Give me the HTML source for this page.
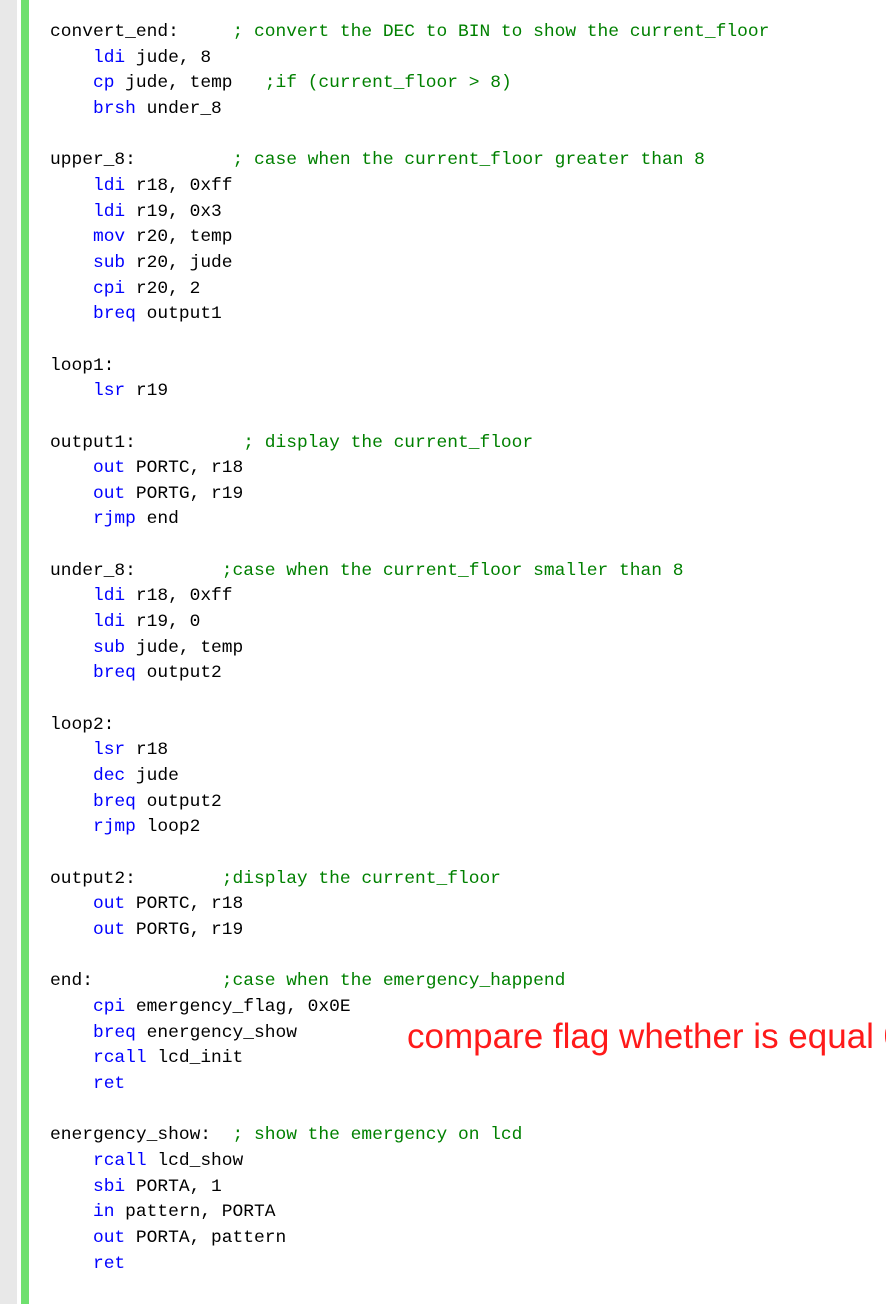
<!DOCTYPE html>
<html><head><meta charset="utf-8"><style>
html,body{margin:0;padding:0;width:886px;height:1304px;overflow:hidden;background:#fff;}
.g{position:absolute;left:0;top:0;width:17px;height:1304px;background:#e8e8e8;}
.gr{position:absolute;left:21px;top:0;width:8px;height:1304px;background:#6ee06e;}
pre{position:absolute;left:50px;top:20px;margin:0;font-family:"Liberation Mono",monospace;font-size:17.9px;line-height:25.65px;color:#000;}
.k{color:#0000ff}.c{color:#008000}
.red{position:absolute;left:407px;top:1017px;font-family:"Liberation Sans",sans-serif;font-size:35px;color:#ff1a1a;white-space:nowrap;}
</style></head><body>
<div class="g"></div><div class="gr"></div>
<pre>convert_end:     <span class="c">; convert the DEC to BIN to show the current_floor</span>
    <span class="k">ldi</span> jude, 8
    <span class="k">cp</span> jude, temp   <span class="c">;if (current_floor &gt; 8)</span>
    <span class="k">brsh</span> under_8

upper_8:         <span class="c">; case when the current_floor greater than 8</span>
    <span class="k">ldi</span> r18, 0xff
    <span class="k">ldi</span> r19, 0x3
    <span class="k">mov</span> r20, temp
    <span class="k">sub</span> r20, jude
    <span class="k">cpi</span> r20, 2
    <span class="k">breq</span> output1

loop1:
    <span class="k">lsr</span> r19

output1:          <span class="c">; display the current_floor</span>
    <span class="k">out</span> PORTC, r18
    <span class="k">out</span> PORTG, r19
    <span class="k">rjmp</span> end

under_8:        <span class="c">;case when the current_floor smaller than 8</span>
    <span class="k">ldi</span> r18, 0xff
    <span class="k">ldi</span> r19, 0
    <span class="k">sub</span> jude, temp
    <span class="k">breq</span> output2

loop2:
    <span class="k">lsr</span> r18
    <span class="k">dec</span> jude
    <span class="k">breq</span> output2
    <span class="k">rjmp</span> loop2

output2:        <span class="c">;display the current_floor</span>
    <span class="k">out</span> PORTC, r18
    <span class="k">out</span> PORTG, r19

end:            <span class="c">;case when the emergency_happend</span>
    <span class="k">cpi</span> emergency_flag, 0x0E
    <span class="k">breq</span> energency_show
    <span class="k">rcall</span> lcd_init
    <span class="k">ret</span>

energency_show:  <span class="c">; show the emergency on lcd</span>
    <span class="k">rcall</span> lcd_show
    <span class="k">sbi</span> PORTA, 1
    <span class="k">in</span> pattern, PORTA
    <span class="k">out</span> PORTA, pattern
    <span class="k">ret</span></pre>
<div class="red">compare flag whether is equal 0</div>
</body></html>
